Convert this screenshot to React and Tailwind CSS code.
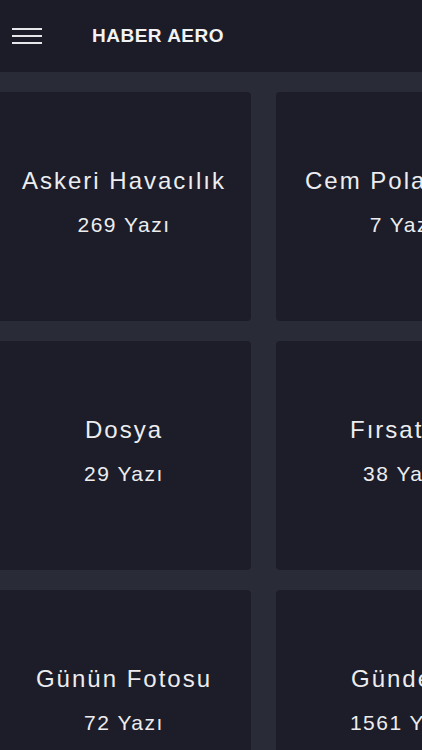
import React from "react";

const cards = [
  ["Askeri Havacılık", "269 Yazı"],
  ["Cem Polat Özel", "7 Yazı"],
  ["Dosya", "29 Yazı"],
  ["Fırsatlar", "38 Yazı"],
  ["Günün Fotosu", "72 Yazı"],
  ["Gündem", "1561 Yazı"],
];

export default function App() {
  return (
    <div
      className="w-[422px] h-[750px] overflow-hidden bg-[#292b37] flex flex-col"
      style={{ fontFamily: '"Liberation Sans", Arial, sans-serif' }}
    >
      <header className="h-[72px] shrink-0 bg-[#1b1c27] flex items-center">
        <div className="ml-[12px] w-[30px] flex flex-col gap-[5px] mb-[1px]">
          <div className="h-[2px] bg-[#e6e6ea]" />
          <div className="h-[2px] bg-[#e6e6ea]" />
          <div className="h-[2px] bg-[#e6e6ea]" />
        </div>
        <div className="ml-[50px] text-[19px] leading-[22px] font-bold tracking-[0.5px] text-[#f2f2f4] mb-[1px]">
          HABER AERO
        </div>
      </header>
      <div className="pt-[20px] -ml-[3px] grid grid-cols-[254px_254px] gap-x-[25px] gap-y-[20px]">
        {cards.map(([t, c]) => (
          <div
            key={t}
            className="h-[229px] rounded-[4px] bg-[#1c1d28] flex flex-col items-center justify-center pb-[10px]"
          >
            <div className="text-[24px] leading-[27px] tracking-[2px] text-[#ededf0] whitespace-nowrap">
              {t}
            </div>
            <div className="mt-[19px] text-[21px] leading-[24px] tracking-[1.5px] text-[#ededf0] whitespace-nowrap">
              {c}
            </div>
          </div>
        ))}
      </div>
    </div>
  );
}
